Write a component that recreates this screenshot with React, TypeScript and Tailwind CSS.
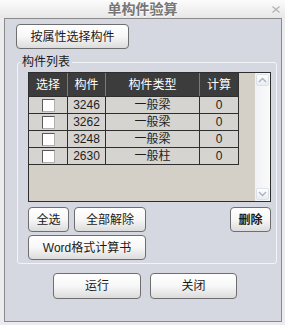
import type { ReactNode } from "react";

// 单构件验算 dialog

type Row = { id: string; type: string; calc: string };

const ROWS: Row[] = [
  { id: "3246", type: "一般梁", calc: "0" },
  { id: "3262", type: "一般梁", calc: "0" },
  { id: "3248", type: "一般梁", calc: "0" },
  { id: "2630", type: "一般柱", calc: "0" },
];

function Btn({
  children,
  className = "",
  bold = false,
}: {
  children: ReactNode;
  className?: string;
  bold?: boolean;
}) {
  return (
    <button
      className={`flex items-center justify-center shrink-0 rounded-[4px] border border-[#6e6e6e] bg-linear-to-b from-[#ffffff] via-[#f7f7f7] to-[#dcdcdc] text-[12px] leading-none text-[#1a1a1a] ${
        bold ? "font-bold" : ""
      } ${className}`}
    >
      {children}
    </button>
  );
}

function Chevron({ up }: { up?: boolean }) {
  return (
    <svg width="9" height="6" viewBox="0 0 9 6">
      <path
        d={up ? "M1 5 L4.5 1.5 L8 5" : "M1 1 L4.5 4.5 L8 1"}
        fill="none"
        stroke="#a9b1c0"
        strokeWidth="1.3"
      />
    </svg>
  );
}

function ScrollBtn({ up }: { up?: boolean }) {
  return (
    <div className="w-[13px] h-[12px] mx-auto flex items-center justify-center rounded-[2px] border border-[#dde1e8] bg-linear-to-b from-[#ffffff] to-[#e9ecf2]">
      <Chevron up={up} />
    </div>
  );
}

export default function App() {
  return (
    <div className="w-[285px] h-[325px] flex flex-col bg-[#ececee] font-['Liberation_Sans','Noto_Sans_CJK_SC',sans-serif] select-none">
      {/* TITLE */}
      <div className="h-[18px] shrink-0 relative flex items-center justify-center bg-linear-to-b from-[#fcfcfc] to-[#e7e7e7]">
        <span className="text-[14px] font-bold leading-none text-[#767676] [text-shadow:0_1px_0_#ffffff]">
          单构件验算
        </span>
        <svg
          className="absolute right-[5px] top-[6px]"
          width="8"
          height="7"
          viewBox="0 0 8 7"
        >
          <path d="M0.5 0.5 L7.5 6.5 M7.5 0.5 L0.5 6.5" stroke="#b4b4b4" strokeWidth="1.3" />
        </svg>
      </div>

      {/* BODY */}
      <div className="flex-1 ml-[4px] mr-[3px] mb-[3px] border border-[#8a8a8a] bg-[#d5d8e0] flex flex-col">
        <Btn className="ml-[11px] mt-[5px] w-[113px] h-[25px]">按属性选择构件</Btn>

        <fieldset className="ml-[12px] mr-[4px] mt-[6px] rounded-[3px] border border-[#f3f4f7] p-0">
          <legend className="ml-[2px] px-[2px] h-[14px] text-[12px] leading-[14px] text-[#1a1a1a]">
            构件列表
          </legend>
          <div className="pl-[10px] pr-[5px] pt-[3px] pb-[3px] flex flex-col">
            {/* LIST */}
            <div className="h-[130px] border border-[#2e2e2e] flex">
              <div className="flex-1 bg-[#d4d0c8]">
                <div className="w-[210px]">
                  <div className="grid grid-cols-[39px_38px_94px_39px] h-[24px] bg-[#3c3c3c] border-b border-[#2e2e2e] text-[12px] leading-none text-white">
                    <div className="flex items-center justify-center border-r border-[#7a7a7a]">选择</div>
                    <div className="flex items-center justify-center border-r border-[#7a7a7a]">构件</div>
                    <div className="flex items-center justify-center border-r border-[#7a7a7a]">构件类型</div>
                    <div className="flex items-center justify-center border-r border-[#2e2e2e]">计算</div>
                  </div>
                  {ROWS.map((r) => (
                    <div
                      key={r.id}
                      className="grid grid-cols-[39px_38px_94px_39px] h-[17px] bg-[#d6d4d0] border-b border-[#2e2e2e] text-[12px] leading-none text-[#1e1e1e]"
                    >
                      <div className="flex items-center justify-center border-r border-[#2e2e2e]">
                        <span className="w-[13px] h-[13px] bg-white border border-t-[#5a5a5a] border-l-[#5a5a5a] border-b-[#b0b0b0] border-r-[#b0b0b0]" />
                      </div>
                      <div className="flex items-center justify-center border-r border-[#2e2e2e]">{r.id}</div>
                      <div className="flex items-center justify-center border-r border-[#2e2e2e]">{r.type}</div>
                      <div className="flex items-center justify-center border-r border-[#2e2e2e]">{r.calc}</div>
                    </div>
                  ))}
                </div>
              </div>
              {/* scrollbar */}
              <div className="w-[15px] flex flex-col justify-between py-[1px] bg-linear-to-r from-[#f1f2f5] to-[#fafafb]">
                <ScrollBtn up />
                <ScrollBtn />
              </div>
            </div>

            {/* ACTIONS */}
            <div className="mt-[5px] flex gap-[5px]">
              <Btn className="w-[41px] h-[25px]">全选</Btn>
              <Btn className="w-[72px] h-[25px]">全部解除</Btn>
              <Btn bold className="ml-auto w-[41px] h-[25px]">删除</Btn>
            </div>
            <Btn className="mt-[3px] w-[118px] h-[25px]">Word格式计算书</Btn>
          </div>
        </fieldset>

        {/* FOOTER */}
        <div className="mt-[9px] ml-[48px] flex gap-[9px]">
          <Btn className="w-[88px] h-[26px]">运行</Btn>
          <Btn className="w-[87px] h-[26px]">关闭</Btn>
        </div>
      </div>
    </div>
  );
}
